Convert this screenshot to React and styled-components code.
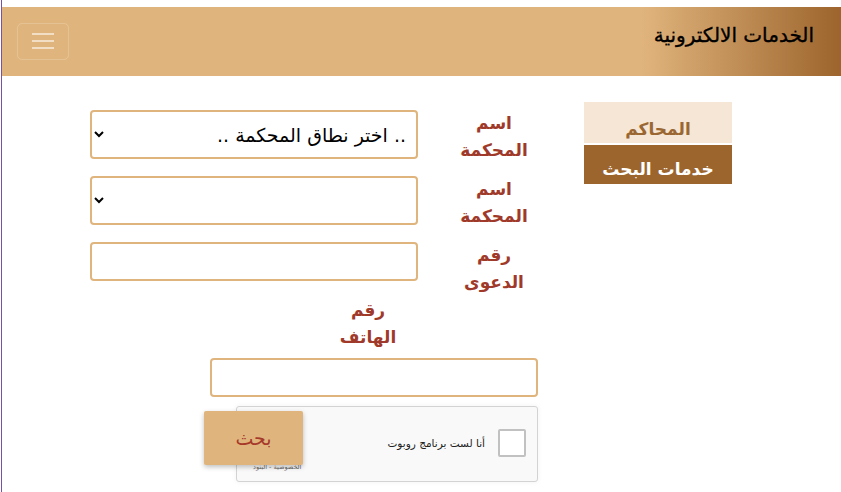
import React from "react";
import styled, { createGlobalStyle } from "styled-components";

const Global = createGlobalStyle`
  html, body { margin: 0; padding: 0; background: #fff; }
  body { font-family: "DejaVu Sans", "Noto Sans", sans-serif; }
  * { box-sizing: border-box; }
`;

const Page = styled.div`
  margin-left: 1px;
  border-left: 1px solid #7b4fa6;
  padding-top: 7px;
  min-height: 100vh;
  direction: rtl;
`;

const Header = styled.header`
  height: 69px;
  display: flex;
  align-items: center;
  justify-content: space-between;
  padding: 0 27px 0 15px;
  background: linear-gradient(to left, #9d642d 0px, #e0b57d 200px);
`;

const Title = styled.h1`
  margin: 0 0 14px;
  font-size: 20px;
  font-weight: normal;
  color: #000;
  -webkit-text-stroke: 0.35px #000;
`;

const Burger = styled.button`
  width: 52px;
  height: 37px;
  margin-top: -1px;
  border: 1px solid rgba(255, 255, 255, 0.18);
  border-radius: 5px;
  background: transparent;
  display: flex;
  flex-direction: column;
  align-items: center;
  justify-content: center;
  gap: 5px;
  padding: 0;
`;

const BurgerLine = styled.span`
  display: block;
  width: 22px;
  height: 2px;
  background: rgba(255, 255, 255, 0.55);
`;

const Main = styled.main`
  display: flex;
  align-items: flex-start;
  gap: 46px;
  padding: 26px 109px 0 0;
`;

const Side = styled.nav`
  width: 148px;
  display: flex;
  flex-direction: column;
  gap: 2px;
`;

const SideItem = styled.div`
  height: ${(p) => (p.$active ? 39 : 41)}px;
  padding-top: ${(p) => (p.$active ? 12 : 15)}px;
  text-align: center;
  font-size: 17px;
  font-weight: bold;
  line-height: 24px;
  background: ${(p) => (p.$active ? "#9d652e" : "#f5e6d5")};
  color: ${(p) => (p.$active ? "#fff" : "#9a6631")};
`;

const Form = styled.form`
  width: 448px;
  margin-top: 8px;
  display: flex;
  flex-direction: column;
`;

const Fields = styled.div`
  display: flex;
  flex-direction: column;
  gap: 12px;
`;

const Row = styled.div`
  display: flex;
  align-items: flex-start;
  gap: 32px;
`;

const Label = styled.label`
  width: 88px;
  text-align: center;
  font-size: 17px;
  font-weight: bold;
  line-height: 27px;
  color: #9f3a2b;
`;

const Select = styled.select`
  width: 328px;
  height: 49px;
  border: 2px solid #e0b57d;
  border-radius: 4px;
  background: #fff;
  font-family: "DejaVu Sans", sans-serif;
  font-size: 19px;
  color: #000;
  padding: 0 6px;
  direction: rtl;
`;

const Input = styled.input`
  width: 328px;
  height: 39px;
  border: 2px solid #e0b57d;
  border-radius: 4px;
  background: #fff;
  font-family: "DejaVu Sans", sans-serif;
  font-size: 16px;
  padding: 0 8px;
`;

const Phone = styled.div`
  margin-top: 1px;
  width: 328px;
  display: flex;
  flex-direction: column;
  align-items: center;
  gap: 7px;
`;

const PhoneLabel = styled(Label)`
  width: 100%;
  padding-right: 12px;
`;

const Bottom = styled.div`
  margin-top: 9px;
  display: flex;
  align-items: flex-start;
`;

const Captcha = styled.div`
  width: 302px;
  height: 76px;
  background: #f9f9f9;
  border: 1px solid #d3d3d3;
  border-radius: 3px;
  box-shadow: 0 0 4px 1px rgba(0, 0, 0, 0.04);
  display: flex;
  flex-direction: column;
  padding: 22px 11px 0 16px;
`;

const CaptchaMain = styled.div`
  display: flex;
  align-items: center;
  gap: 13px;
`;

const Check = styled.span`
  width: 28px;
  height: 28px;
  background: #fff;
  border: 2px solid #c1c1c1;
  border-radius: 2px;
`;

const CaptchaText = styled.span`
  font-family: "DejaVu Sans", sans-serif;
  font-size: 10.5px;
  color: #222;
`;

const CaptchaLinks = styled.span`
  margin-top: 6px;
  align-self: flex-end;
  font-size: 6.5px;
  color: #666;
`;

const SearchBtn = styled.button`
  width: 99px;
  height: 54px;
  margin-top: 5px;
  margin-right: -67px;
  border: none;
  border-radius: 2px;
  background: #e0b57d;
  color: #a6392a;
  font-family: "DejaVu Sans", sans-serif;
  font-size: 19px;
  box-shadow: 0 2px 5px rgba(0, 0, 0, 0.25);
  position: relative;
`;

export default function App() {
  return (
    <>
      <Global />
      <Page>
        <Header>
          <Title>الخدمات الالكترونية</Title>
          <Burger aria-label="menu">
            <BurgerLine />
            <BurgerLine />
            <BurgerLine />
          </Burger>
        </Header>
        <Main>
          <Side>
            <SideItem>المحاكم</SideItem>
            <SideItem $active>خدمات البحث</SideItem>
          </Side>
          <Form>
            <Fields>
              <Row>
                <Label>اسم المحكمة</Label>
                <Select defaultValue="">
                  <option value="">.. اختر نطاق المحكمة ..</option>
                </Select>
              </Row>
              <Row>
                <Label>اسم المحكمة</Label>
                <Select defaultValue="">
                  <option value=""></option>
                </Select>
              </Row>
              <Row>
                <Label>رقم الدعوى</Label>
                <Input type="text" />
              </Row>
            </Fields>
            <Phone>
              <PhoneLabel>
                رقم
                <br />
                الهاتف
              </PhoneLabel>
              <Input type="text" />
            </Phone>
            <Bottom>
              <Captcha>
                <CaptchaMain>
                  <Check />
                  <CaptchaText>أنا لست برنامج روبوت</CaptchaText>
                </CaptchaMain>
                <CaptchaLinks>الخصوصية - البنود</CaptchaLinks>
              </Captcha>
              <SearchBtn type="button">بحث</SearchBtn>
            </Bottom>
          </Form>
        </Main>
      </Page>
    </>
  );
}
